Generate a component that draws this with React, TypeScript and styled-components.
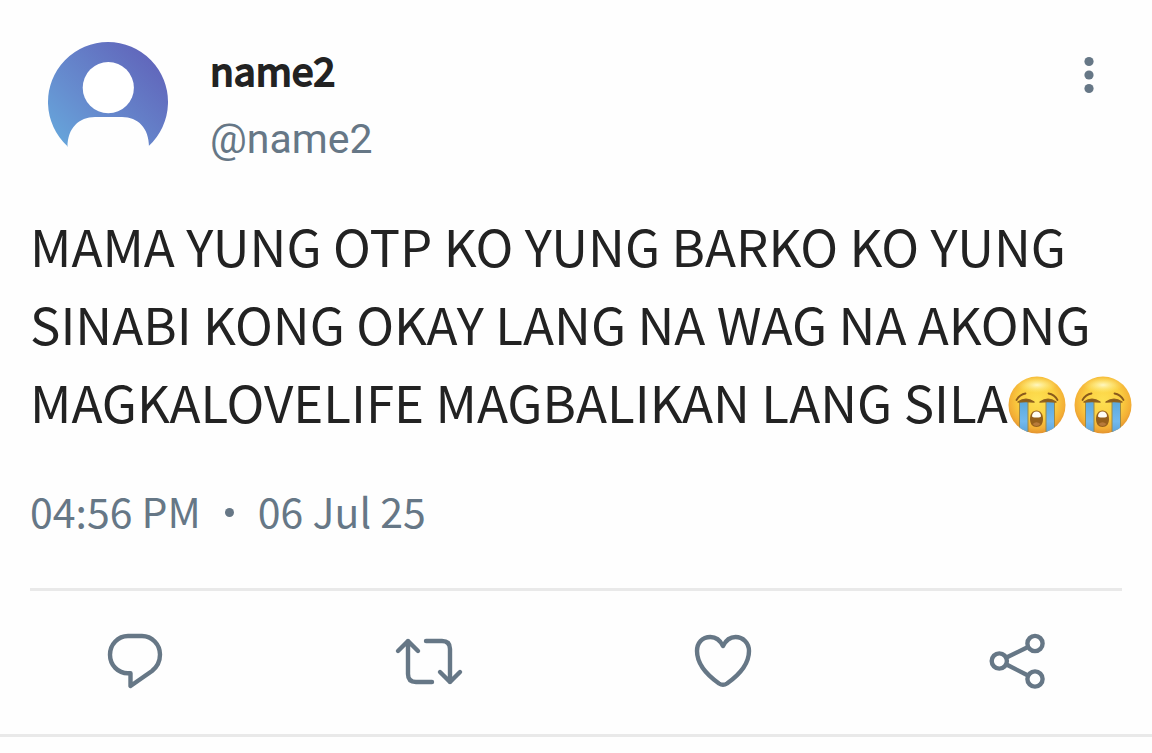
import React from "react";
import styled, { createGlobalStyle } from "styled-components";

const ink = "#222222";
const slate = "#667786";
const rule = "#e9e9e9";

const GlobalStyle = createGlobalStyle`
  * { box-sizing: border-box; }
  body {
    margin: 0;
    background: #fefefe;
    font-family: "Noto Sans CJK SC", "Noto Sans", sans-serif;
    color: ${ink};
  }
`;

const Post = styled.article`
  border-bottom: 3px solid ${rule};
  padding-top: 42px;
`;

const Header = styled.header`
  display: flex;
  align-items: flex-start;
  padding: 0 40px 0 48px;
`;

const Avatar = styled.svg`
  width: 120px;
  height: 120px;
  flex: none;
`;

const Names = styled.div`
  flex: 1;
  margin-left: 42px;
`;

const DisplayName = styled.h1`
  margin: 0;
  font-size: 39px;
  line-height: 54px;
  font-weight: 400;
  -webkit-text-stroke: 2px ${ink};
`;

const Handle = styled.a`
  display: block;
  margin-top: 15px;
  font-family: Roboto, sans-serif;
  font-size: 41px;
  line-height: 56px;
  color: ${slate};
  text-decoration: none;
`;

const IconButton = styled.button`
  display: block;
  flex: none;
  padding: 0;
  border: 0;
  background: none;
  color: ${slate};
  cursor: pointer;
`;

const Icon = styled.svg`
  display: block;
  fill: none;
  stroke: currentColor;
  stroke-width: 4.4;
  stroke-linecap: round;
  stroke-linejoin: round;
`;

const Body = styled.p`
  margin: 39px 12px 0 30px;
  font-size: 51px;
  line-height: 78px;
`;

const Emoji = styled.svg`
  width: 58px;
  height: 58px;
  margin-right: 8px;
  vertical-align: -11px;
`;

const Meta = styled.div`
  display: flex;
  align-items: center;
  gap: 24px;
  margin: 40px 30px 0;
  font-size: 41px;
  line-height: 60px;
  color: ${slate};
`;

const Dot = styled.span`
  width: 9px;
  height: 9px;
  margin-top: 4px;
  border-radius: 50%;
  background: currentColor;
`;

const Actions = styled.div`
  display: flex;
  justify-content: space-between;
  margin: 48px 30px 0;
  padding: 29px 57px 34px 60px;
  border-top: 3px solid ${rule};
`;

function Sob({ id }: { id: string }) {
  return (
    <Emoji viewBox="0 0 58 58" role="img" aria-label="loudly crying face">
      <defs>
        <radialGradient id={id} cx="50%" cy="42%" r="58%">
          <stop offset="0" stopColor="#fde052" />
          <stop offset="0.55" stopColor="#fbcf41" />
          <stop offset="0.85" stopColor="#f3ae35" />
          <stop offset="1" stopColor="#e3932f" />
        </radialGradient>
        <radialGradient id={id + "-shine"} cx="50%" cy="50%" r="50%">
          <stop offset="0" stopColor="#fffbd0" stopOpacity="0.9" />
          <stop offset="1" stopColor="#fff27a" stopOpacity="0" />
        </radialGradient>
        <linearGradient id={id + "-tear"} x1="0" y1="0" x2="0" y2="1">
          <stop offset="0" stopColor="#5ba8dd" />
          <stop offset="0.6" stopColor="#72b9ee" />
          <stop offset="1" stopColor="#5a9fd6" />
        </linearGradient>
        <clipPath id={id + "-face"}>
          <circle cx="29" cy="29" r="28.5" />
        </clipPath>
      </defs>
      <circle cx="29" cy="29" r="28.5" fill={`url(#${id})`} />
      <ellipse cx="29" cy="9" rx="20" ry="8" fill={`url(#${id}-shine)`} />
      <g clipPath={`url(#${id}-face)`}>
        <rect x="11.5" y="25" width="8.5" height="34" fill={`url(#${id}-tear)`} />
        <rect x="38" y="25" width="8.5" height="34" fill={`url(#${id}-tear)`} />
        <path d="M11.5 26V54M20 26V56M38 26V56M46.5 26V54" stroke="#9b8a49" strokeWidth="1" />
      </g>
      <g fill="none" stroke="#8a5a1c" strokeLinecap="round">
        <path d="M8.5 24Q11.5 18.5 17.5 17.5" strokeWidth="1.8" />
        <path d="M49.5 24Q46.5 18.5 40.5 17.5" strokeWidth="1.8" />
      </g>
      <path d="M10 26Q18 20.500 26 26Q18 25 10 26Z" fill="#8a5a1c" stroke="#8f621f" strokeWidth="1.5" strokeLinejoin="round" />
      <path d="M48 26Q40 20.500 32 26Q40 25 48 26Z" fill="#8a5a1c" stroke="#8f621f" strokeWidth="1.5" strokeLinejoin="round" />
      <path d="M28.500 34.500C32.500 34.500 35 38 35 43C35 48 32.500 51 28.500 51S22 48 22 43C22 38 24.500 34.500 28.500 34.500Z" fill="#96601c" />
      <path d="M24 40Q24.500 35.500 28.500 35.500T33 40Q33 41.500 28.500 41.500T24 40Z" fill="#fffdf5" />
      <path d="M24.500 48Q28.500 44.500 32.500 48Q31 50 28.500 50T24.500 48Z" fill="#b87a3a" />
    </Emoji>
  );
}

function Action({ label, children }: { label: string; children: React.ReactNode }) {
  return (
    <IconButton type="button" aria-label={label}>
      <Icon width="90" height="80" viewBox="0 0 90 80" aria-hidden="true">
        {children}
      </Icon>
    </IconButton>
  );
}

export default function App() {
  return (
    <>
      <GlobalStyle />
      <Post>
        <Header>
          <Avatar viewBox="0 0 120 120" role="img" aria-label="name2 avatar">
            <defs>
              <linearGradient id="avatar" x1="0" y1="0.85" x2="0.8" y2="0.05">
                <stop offset="0" stopColor="#66aadd" />
                <stop offset="0.4" stopColor="#668dcf" />
                <stop offset="1" stopColor="#6166bb" />
              </linearGradient>
            </defs>
            <path d="M19.500 104.300A60 60 0 1 1 100.500 104.300V122H19.500Z" fill="url(#avatar)" />
            <circle cx="60.300" cy="45.700" r="25.600" fill="#fff" />
            <path d="M18 124V105H19.500C19.500 86 31 75 47 75H74C90 75 101 86 101 105H103V124Z" fill="#fefefe" />
          </Avatar>
          <Names>
            <DisplayName>name2</DisplayName>
            <Handle href="#name2">@name2</Handle>
          </Names>
          <IconButton type="button" aria-label="More options">
            <svg width="46" height="66" viewBox="0 0 46 66" fill="currentColor" aria-hidden="true">
              <circle cx="23" cy="19.500" r="4.600" />
              <circle cx="23" cy="33" r="4.600" />
              <circle cx="23" cy="46.500" r="4.600" />
            </svg>
          </IconButton>
        </Header>
        <Body>
          MAMA YUNG OTP KO YUNG BARKO KO YUNG
          <br />
          SINABI KONG OKAY LANG NA WAG NA AKONG
          <br />
          MAGKALOVELIFE MAGBALIKAN LANG SILA
          <Sob id="sob-a" />
          <Sob id="sob-b" />
        </Body>
        <Meta>
          <time dateTime="16:56">04:56 PM</time>
          <Dot />
          <time dateTime="2025-07-06">06 Jul 25</time>
        </Meta>
        <Actions>
          <Action label="Reply">
            <path d="M38 16H52C62 16 70 24.400 70 34.500C70 41 67 47 62 51L40.500 66V53.300H38C28 53.300 20 45 20 34.700C20 24.400 28 16 38 16Z" />
          </Action>
          <Action label="Repost">
            <path d="M13 31L23 21L33 31M23 21V54Q23 62 31 62H47M41 21H57Q65 21 65 29V62M55 52L65 62L75 52" />
          </Action>
          <Action label="Like">
            <path d="M43 26C40 20 35 17 30.500 17C22 17 17 23 17 31C17 44 27 55 39 63.500Q43 66 47 63.500C59 55 69 44 69 31C69 23 63 17 55.500 17C51 17 46 20 43 26Z" />
          </Action>
          <Action label="Share">
            <circle cx="24.300" cy="41" r="7.600" />
            <circle cx="60" cy="23.500" r="7.600" />
            <circle cx="60" cy="59" r="7.600" />
            <path d="M31.500 37.500L53 27M31.500 44.500L53 55.500" />
          </Action>
        </Actions>
      </Post>
    </>
  );
}
